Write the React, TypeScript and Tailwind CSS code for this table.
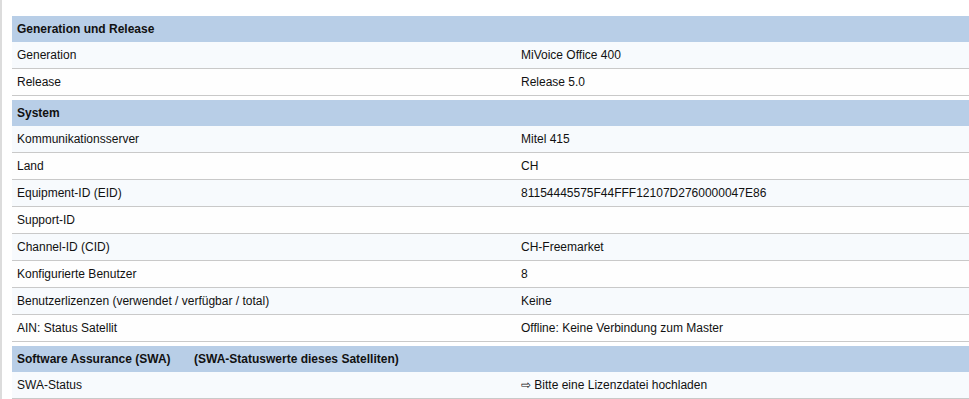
import React from "react";

type Row = { label: string; value: string; light: boolean };

const Header = ({ children }: { children: React.ReactNode }) => (
  <div className="h-[26px] bg-[#b8cee7] flex items-center pl-[5px] font-bold text-[12px] text-[#111]">
    {children}
  </div>
);

const DataRow = ({ label, value, light }: Row) => (
  <div
    className={`h-[27px] border-b border-[#c9c9c9] flex items-center text-[12px] text-[#111] ${
      light ? "bg-[#f7fafd]" : "bg-[#fefefe]"
    }`}
  >
    <div className="w-[509px] pl-[5px] shrink-0">{label}</div>
    <div>{value}</div>
  </div>
);

export default function App() {
  const sec1: Row[] = [
    { label: "Generation", value: "MiVoice Office 400", light: true },
    { label: "Release", value: "Release 5.0", light: false },
  ];
  const sec2: Row[] = [
    { label: "Kommunikationsserver", value: "Mitel 415", light: true },
    { label: "Land", value: "CH", light: false },
    { label: "Equipment-ID (EID)", value: "81154445575F44FFF12107D2760000047E86", light: true },
    { label: "Support-ID", value: "", light: false },
    { label: "Channel-ID (CID)", value: "CH-Freemarket", light: true },
    { label: "Konfigurierte Benutzer", value: "8", light: false },
    { label: "Benutzerlizenzen (verwendet / verfügbar / total)", value: "Keine", light: true },
    { label: "AIN: Status Satellit", value: "Offline: Keine Verbindung zum Master", light: false },
  ];
  return (
    <div
      className="w-[969px] h-[399px] overflow-hidden bg-white flex"
      style={{ fontFamily: '"Liberation Sans", Arial, sans-serif' }}
    >
      <div className="w-[2px] bg-[#dcdcdc] shrink-0" />
      <div className="flex-1 pl-[10px] pt-[16px]">
        <div className="w-[980px] flex flex-col">
          <Header>Generation und Release</Header>
          {sec1.map((r) => (
            <DataRow key={r.label} {...r} />
          ))}
          <div className="h-[4px]" />
          <Header>System</Header>
          {sec2.map((r) => (
            <DataRow key={r.label} {...r} />
          ))}
          <div className="h-[4px]" />
          <Header>
            <span className="w-[177px]">Software Assurance (SWA)</span>
            <span>(SWA-Statuswerte dieses Satelliten)</span>
          </Header>
          <DataRow label="SWA-Status" value="⇨ Bitte eine Lizenzdatei hochladen" light={true} />
        </div>
      </div>
    </div>
  );
}
